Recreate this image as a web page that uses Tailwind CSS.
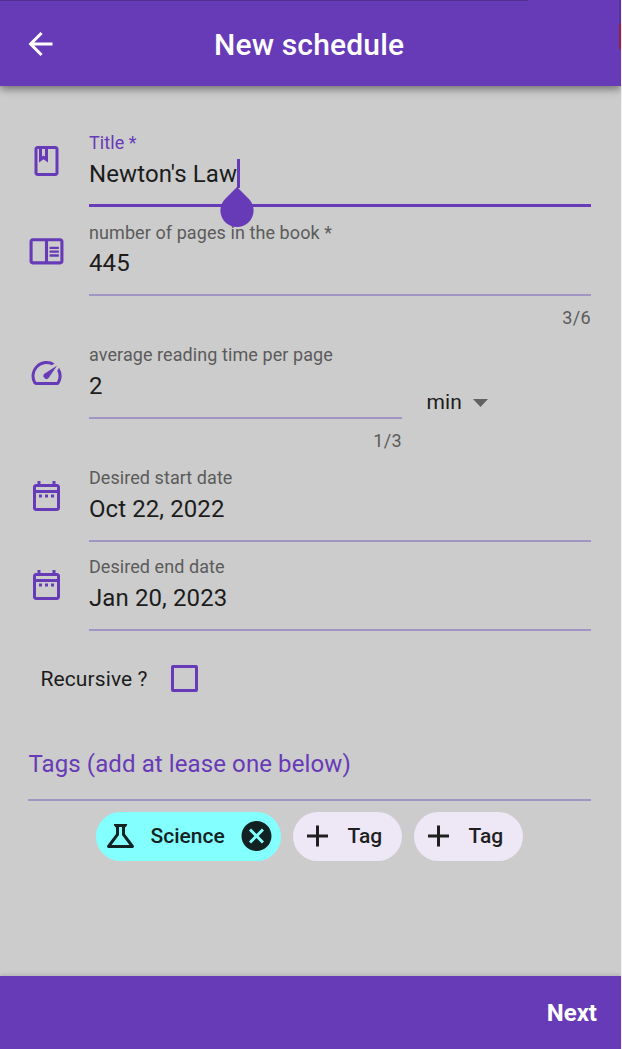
<!DOCTYPE html>
<html lang="en">
<head>
<meta charset="utf-8">
<title>New schedule</title>
<script src="https://cdn.jsdelivr.net/npm/@tailwindcss/browser@4"></script>
</head>
<body class="bg-[#f3f3f3] font-[Roboto,sans-serif]">
<div class="relative flex h-[1049px] w-[621px] flex-col overflow-hidden bg-[#cccccc] text-[#1c1c1c]">
  <header class="relative z-10 flex h-[86px] shrink-0 items-center bg-[#673ab7] pt-[3px] pl-[22px] text-white shadow-[0_3px_8px_rgba(0,0,0,0.45)]">
    <svg class="-mt-px h-[36px] w-[37px]" viewBox="0 0 24 24" fill="currentColor"><path d="M20 11H7.83l5.59-5.59L12 4l-8 8 8 8 1.41-1.41L7.83 13H20v-2z"/></svg>
    <h1 class="ml-[155px] text-[30px] leading-9 font-medium tracking-[0.17px] whitespace-nowrap">New schedule</h1>
    <div class="absolute top-0 left-0 h-px w-[528px] bg-[#512d90]"></div>
    <div class="absolute top-0 right-0 h-[23px] w-[2px] bg-[#5b33a8]"></div>
    <div class="absolute top-[23px] right-0 h-[27px] w-[2px] rounded-l-sm bg-[#94214e]"></div>
  </header>

  <main class="flex flex-1 flex-col pt-8">
    <section class="flex h-[89px] pl-7">
      <svg class="mt-[25px] h-[36px] w-[37px] text-[#673ab7]" viewBox="0 0 24 24" fill="currentColor"><path d="M18 2H6c-1.1 0-2 .9-2 2v16c0 1.1.9 2 2 2h12c1.1 0 2-.9 2-2V4c0-1.1-.9-2-2-2zM9 4h2v5l-1-.75L9 9V4zm9 16H6V4h1v9l3-2.25L13 13V4h5v16z"/></svg>
      <div class="relative ml-6 flex h-[89px] w-[502px] flex-col border-b-3 border-[#673ab7] pt-[14px]">
        <label class="text-[18px] leading-[22px] tracking-[0.08px] text-[#673ab7]">Title *</label>
        <p class="mt-[5px] text-[24px] leading-[30px] tracking-[0.1px]">Newton's Law</p>
        <div class="absolute top-[41px] left-[148px] h-[29px] w-[3px] bg-[#673ab7]"></div>
        <svg class="absolute top-[69px] left-[131px] z-10 h-[41px] w-[34px] text-[#673ab7]" viewBox="0 0 34 41" fill="currentColor"><path d="M17 0 28.7 11.7A16.6 16.6 0 1 1 5.3 11.7Z"/></svg>
      </div>
    </section>

    <section class="flex h-[123px] pl-7">
      <svg class="mt-[25px] h-[37px] w-[37px] text-[#673ab7]" viewBox="0 0 24 24" fill="currentColor"><path d="M21 4H3c-1.1 0-2 .9-2 2v13c0 1.1.9 2 2 2h18c1.1 0 2-.9 2-2V6c0-1.1-.9-2-2-2zM3 19V6h8v13H3zm18 0h-8V6h8v13zm-7-9.5h6V11h-6zm0 2.5h6v1.5h-6zm0 2.5h6V16h-6z"/></svg>
      <div class="ml-6 w-[502px]">
        <div class="flex h-[89px] flex-col border-b-2 border-[#a196c3] pt-[15px]">
          <label class="text-[18px] leading-[22px] tracking-[0.08px] text-[#5b5b5b]">number of pages in the book *</label>
          <p class="mt-[4px] text-[24px] leading-[30px] tracking-[0.1px]">445</p>
        </div>
        <p class="mt-[11px] text-right text-[18px] leading-[22px] tracking-[0.4px] text-[#5b5b5b]">3/6</p>
      </div>
    </section>

    <section class="flex h-[123px] pl-7">
      <svg class="mt-[25px] h-[36px] w-[37px] text-[#673ab7]" viewBox="0 0 24 24" fill="currentColor"><path d="m20.38 8.57-1.23 1.85a8 8 0 0 1-.22 7.58H5.07A8 8 0 0 1 15.58 6.85l1.85-1.23A10 10 0 0 0 3.35 19a2 2 0 0 0 1.72 1h13.85a2 2 0 0 0 1.74-1 10 10 0 0 0-.27-10.44zm-9.79 6.84a2 2 0 0 0 2.83 0l5.66-8.49-8.49 5.66a2 2 0 0 0 0 2.83z"/></svg>
      <div class="ml-6 w-[313px]">
        <div class="flex h-[89px] flex-col border-b-2 border-[#a196c3] pt-[14px]">
          <label class="text-[18px] leading-[22px] tracking-[0.08px] text-[#5b5b5b]">average reading time per page</label>
          <p class="mt-[5px] text-[24px] leading-[30px] tracking-[0.1px]">2</p>
        </div>
        <p class="mt-[11px] text-right text-[18px] leading-[22px] tracking-[0.4px] text-[#5b5b5b]">1/3</p>
      </div>
      <div class="mt-[58px] ml-[24.5px] flex h-7 items-center">
        <span class="text-[21px] leading-7 tracking-[0.1px]">min</span>
        <svg class="mt-px ml-[11px] h-2 w-[15px]" viewBox="0 0 15 8" fill="#616161"><path d="M0 0h15L7.5 8z"/></svg>
      </div>
    </section>

    <section class="flex h-[89px] pl-7">
      <svg class="mt-[25px] h-[36px] w-[37px] text-[#673ab7]" viewBox="0 0 24 24" fill="currentColor"><path d="M7 11h2v2H7v-2zm14-5v14c0 1.1-.9 2-2 2H5c-1.11 0-2-.9-2-2l.01-14c0-1.1.88-2 1.99-2h1V2h2v2h8V2h2v2h1c1.1 0 2 .9 2 2zM5 8h14V6H5v2zm14 12V10H5v10h14zm-4-7h2v-2h-2v2zm-4 0h2v-2h-2v2z"/></svg>
      <div class="ml-6 flex h-[89px] w-[502px] flex-col border-b-2 border-[#a196c3] pt-[14px]">
        <label class="text-[18px] leading-[22px] tracking-[0.06px] text-[#5b5b5b]">Desired start date</label>
        <p class="mt-[5px] text-[24px] leading-[30px] tracking-[0.08px]">Oct 22, 2022</p>
      </div>
    </section>

    <section class="flex h-[89px] pl-7">
      <svg class="mt-[25px] h-[36px] w-[37px] text-[#673ab7]" viewBox="0 0 24 24" fill="currentColor"><path d="M7 11h2v2H7v-2zm14-5v14c0 1.1-.9 2-2 2H5c-1.11 0-2-.9-2-2l.01-14c0-1.1.88-2 1.99-2h1V2h2v2h8V2h2v2h1c1.1 0 2 .9 2 2zM5 8h14V6H5v2zm14 12V10H5v10h14zm-4-7h2v-2h-2v2zm-4 0h2v-2h-2v2z"/></svg>
      <div class="ml-6 flex h-[89px] w-[502px] flex-col border-b-2 border-[#a196c3] pt-[14px]">
        <label class="text-[18px] leading-[22px] tracking-[0.06px] text-[#5b5b5b]">Desired end date</label>
        <p class="mt-[5px] text-[24px] leading-[30px] tracking-[0.1px]">Jan 20, 2023</p>
      </div>
    </section>

    <section class="mt-[34px] flex h-7 items-center pl-[40.5px]">
      <span class="w-[130px] text-[21px] leading-7 tracking-[0.1px]">Recursive ?</span>
      <span class="mb-px size-[27px] rounded-[2px] border-3 border-[#673ab7]"></span>
    </section>

    <section class="mt-[56px] mr-[30px] ml-7 h-[52px] border-b-2 border-[#a196c3]">
      <h2 class="pl-[0.5px] text-[24px] leading-[30px] tracking-[0.1px] text-[#673ab7]">Tags (add at lease one below)</h2>
    </section>

    <section class="mt-[11px] flex gap-3 pl-24 text-[21px] font-medium text-[#1f1f1f]">
      <div class="flex h-[49px] w-[185px] items-center rounded-full bg-[#84ffff] pl-[6px] text-[#122222]">
        <svg class="-mt-px h-[36px] w-[37px]" viewBox="0 0 24 24" fill="currentColor"><path d="M13 11.33 18 18H6l5-6.67V6h2m2.96-2H8.04c-.42 0-.65.48-.39.81L9 6.5v4.17L3.2 18.4c-.49.66-.02 1.6.8 1.6h16c.82 0 1.29-.94.8-1.6L15 10.67V6.5l1.35-1.69c.26-.33.03-.81-.39-.81z"/></svg>
        <span class="ml-[11.5px] w-[87.5px]">Science</span>
        <svg class="-mt-px h-[36px] w-[37px]" viewBox="0 0 24 24" fill="currentColor"><path d="M12 2C6.47 2 2 6.47 2 12s4.47 10 10 10 10-4.47 10-10S17.53 2 12 2zm5 13.59L15.59 17 12 13.41 8.41 17 7 15.59 10.59 12 7 8.41 8.41 7 12 10.59 15.59 7 17 8.41 13.41 12 17 15.59z"/></svg>
      </div>
      <div class="flex h-[49px] w-[109px] items-center rounded-full bg-[#ede7f6] pl-[6px]">
        <svg class="-mt-px h-[36px] w-[37px]" viewBox="0 0 24 24" fill="currentColor"><path d="M19 13h-6v6h-2v-6H5v-2h6V5h2v6h6v2z"/></svg>
        <span class="ml-[11.5px]">Tag</span>
      </div>
      <div class="flex h-[49px] w-[109px] items-center rounded-full bg-[#ede7f6] pl-[6px]">
        <svg class="-mt-px h-[36px] w-[37px]" viewBox="0 0 24 24" fill="currentColor"><path d="M19 13h-6v6h-2v-6H5v-2h6V5h2v6h6v2z"/></svg>
        <span class="ml-[11.5px]">Tag</span>
      </div>
    </section>
  </main>

  <footer class="flex h-[73px] shrink-0 items-center justify-end bg-[#673ab7] pr-6 text-[24px] font-bold text-white shadow-[0_-1px_4px_rgba(0,0,0,0.15)]">Next</footer>
</div>
</body>
</html>
